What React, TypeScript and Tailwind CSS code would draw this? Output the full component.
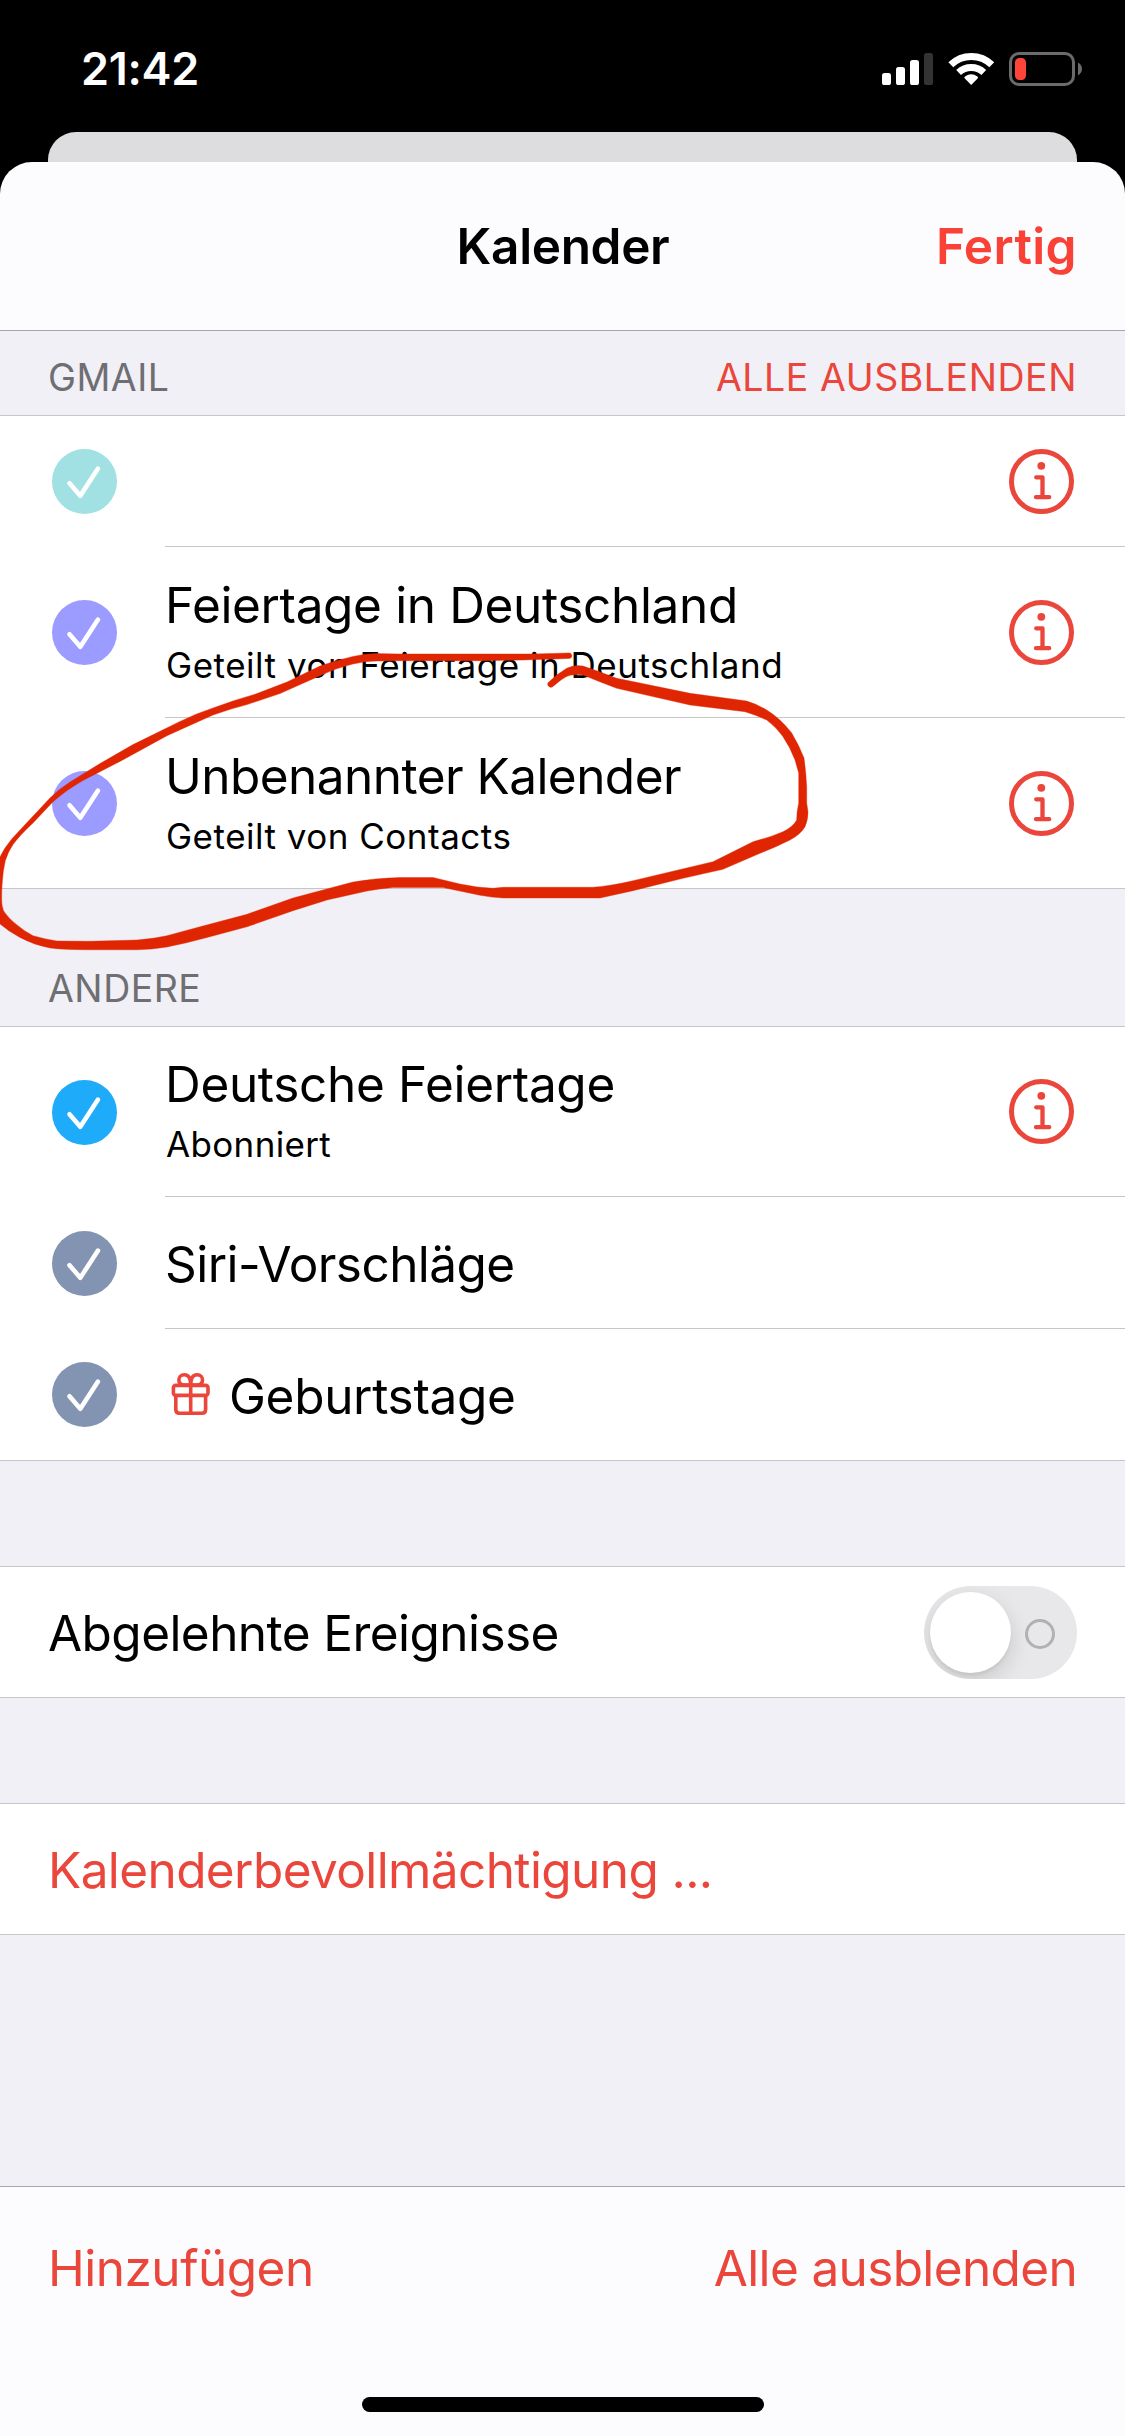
import React from "react"
import clsx from "clsx"


function StatusIcons () {
  return (
    <svg width="202" height="34" viewBox="882 52 202 34" fill="none">
      <g fill="#fff">
        <rect x="882" y="73" width="9" height="12" rx="2.6" />
        <rect x="896" y="67" width="9" height="18" rx="2.6" />
        <rect x="910" y="60" width="9" height="25" rx="2.6" />
      </g>
      <rect x="924" y="53" width="9" height="32" rx="2.6" fill="#333" />
      <g stroke="#fff" strokeWidth="7">
        <path d="M950.8 64.8A29.5 29.5 0 0 1 991.8 64.8" />
        <path d="M958.6 72.5A18.6 18.6 0 0 1 983.8 72.5" />
      </g>
      <path d="M971.2 85L964.6 78.2Q963.9 77.2 965 76.4A10.5 10.5 0 0 1 977.4 76.4Q978.5 77.2 977.8 78.2Z" fill="#fff" />
      <rect x="1010.5" y="53.5" width="63" height="31" rx="8.5" stroke="#6b6b6b" strokeWidth="3" />
      <rect x="1015" y="58" width="11" height="22" rx="4.5" fill="#ff4539" />
      <path d="M1078 62.6Q1082 65 1082 69Q1082 73 1078 75.4Z" fill="#6b6b6b" />
    </svg>
  )
}

function Check ({ color }: { color: string }) {
  return (
    <span className={clsx("block size-[65px] rounded-full", color)}>
      <svg width="65" height="65" viewBox="0 0 65 65" fill="none">
        <path d="M17.5 34.2L28.3 46.8L46 19.6" stroke="#fff" strokeWidth="4.6" strokeLinecap="round" strokeLinejoin="round" />
      </svg>
    </span>
  )
}

function InfoIcon () {
  return (
    <svg width="65" height="65" viewBox="0 0 65 65" fill="none" stroke="#ea463b">
      <circle cx="32.5" cy="32.5" r="30" strokeWidth="5" />
      <circle cx="32.3" cy="16.8" r="3.9" fill="#ea463b" stroke="none" />
      <path d="M27.2 28.3H33.5V48.2M27 48.2H40.2" strokeWidth="4.3" strokeLinecap="round" strokeLinejoin="round" />
    </svg>
  )
}

function GiftIcon () {
  return (
    <svg width="64" height="60" viewBox="165 1365 64 60" fill="none" stroke="#ea463b" strokeWidth="3.6" strokeLinejoin="round">
      <rect x="173.4" y="1384.4" width="34.6" height="10" rx="2.4" />
      <path d="M175.8 1394.4V1408.4Q175.8 1412.2 179.6 1412.2H201.8Q205.6 1412.2 205.6 1408.4V1394.4" />
      <path d="M190.7 1384V1412.2" />
      <path d="M190.7 1384H184.5C176.8 1384 177.2 1373.8 184.3 1373.8C188.4 1373.8 190.7 1377.4 190.7 1384C190.7 1377.4 193 1373.8 197.1 1373.8C204.2 1373.8 204.6 1384 196.9 1384Z" />
    </svg>
  )
}

type RowProps = {
  color: string
  height: string
  title?: string
  titleClass?: string
  subtitle?: string
  subtitleClass?: string
  icon?: React.ReactNode
  info?: boolean
  last?: boolean
}

function CalendarRow ({ color, height, title, titleClass, subtitle, subtitleClass, icon, info, last }: RowProps) {
  return (
    <li className={clsx("flex", height)}>
      <div className={clsx("flex w-[165px] items-center pl-[52px]", last && "border-b border-[#c6c6c9]")}>
        <Check color={color} />
      </div>
      <div className="flex flex-1 items-center justify-between border-b border-[#c6c6c9] pr-[51px]">
        <div>
          <div className={clsx("flex items-center text-[49.5px] leading-[60px] whitespace-nowrap", !subtitle && "pt-[2px]")}>
            {icon}
            <span className={titleClass}>{title}</span>
          </div>
          {subtitle && (
            <p className={clsx("mt-[9px] mb-[4px] pl-px text-[35px] leading-[42px] whitespace-nowrap", subtitleClass)}>{subtitle}</p>
          )}
        </div>
        {info && <InfoIcon />}
      </div>
    </li>
  )
}

function SectionHeader ({ title, action, className }: { title: string, action?: string, className: string }) {
  return (
    <div className={clsx("flex items-end justify-between px-12 pb-[17px] text-[37.5px] leading-[40px]", className)}>
      <h2 className="tracking-[0.5px] text-[#6e6e73]">{title}</h2>
      {action && <button className="tracking-[0.55px] text-[#ea463b]">{action}</button>}
    </div>
  )
}

function Toggle () {
  return (
    <div className="relative h-[93px] w-[153px] overflow-hidden rounded-full bg-[#e8e8ea]">
      <span className="absolute top-[6px] left-[6px] size-[81px] rounded-full bg-white shadow-[0_8px_22px_rgba(0,0,0,0.14),0_3px_3px_rgba(0,0,0,0.05)]" />
      <span className="absolute top-[33px] left-[101px] size-[30px] rounded-full border-[3px] border-[#b1b1b2]" />
    </div>
  )
}

// hand drawn loop around the unnamed calendar
function Scribble () {
  return (
    <svg className="pointer-events-none absolute top-0 left-0" width="1125" height="1000" viewBox="0 0 1125 1000">
      <path
        fill="#e02503"
        stroke="#e02503"
        strokeWidth="0.4"
        strokeLinejoin="round"
        d="M569 652.9L533 654L400 654L377 653.6Q366 653.5 353 656.4Q337 660 320 666L287 682L257 693.6Q234 700 213 708Q195 714 180 721.4L133 744.6L100 763.6L70 782Q59 789 50 798L20 830Q11 839 5 848Q2 853 -1 859V923
        Q8 931 20 937.5Q34 945 50 948Q60 949.5 90 949.8H137Q152 949.5 167 947Q187 943 207 937.5L247 926.8L293 910.7L327 900L367 891Q380 888.5 393 887.5H443L480 895.3Q492 897.5 503 898H600L633 890.7L683 878.3L723 869.3L760 853.3Q774 848 790 840Q801 834 805 826.7Q808 820 808 811.7L806.7 803V786.7Q806 772 804 758Q799 745 791.7 733Q780 718 766.7 710Q757 704 746.7 701L690 693.3L616.7 678.3Q598 671 583 666Q574 664.5 566.7 668.3Q557 674 548 682.7A3.2 3.2 0 0 0 552.7 686.7L561 680Q567 675.5 571.7 675Q578 674 583 675Q600 682 616.7 688.3L690 705L745 711.7Q756 715 766.7 720Q776 727 783 736.7Q790 747 795 760L798.7 773V803Q796.5 813 796.7 820Q793 827 783 831.7Q771 837 753 841.7L713 861.7L633 880.7Q610 886 593 887.3H503L493 888.3Q476 887.5 460 884L433 877.5H400Q375 878 353 882L293 898L247 914.3L200 926.8L167 935.7Q152 939 137 940L90 941.3L57 941Q44 939 33 935.7Q24 931 17 925Q8 918 3.5 910.7Q1.5 905 1.7 900Q1.5 890 2.3 882Q3 870 5.3 860.7Q8 852 13 844.6Q20 835 33 823L53 801.8Q66 790 83 780.4L120 761.4L167 735.7L213 715Q230 709 247 704.6L280 693.6L320 675.7Q336 668 353 664Q366 661 377 661L400 660.7H480L523 660L569 658.5A2.8 2.8 0 0 0 569 652.9Z"
      />
    </svg>
  )
}

export default function App () {
  return (
    <div className="relative flex h-[2436px] w-[1125px] flex-col overflow-hidden bg-black font-['Inter','Liberation_Sans',sans-serif] text-black antialiased">
      <div className="flex h-[132px] shrink-0 items-start justify-between pr-[41px] pl-[81px]">
        <span className="mt-[41px] text-[45px] leading-[56px] font-semibold tracking-[-0.3px] text-white">21:42</span>
        <div className="mt-[52px]">
          <StatusIcons />
        </div>
      </div>
      <div className="mx-12 h-[30px] shrink-0 rounded-t-[28px] bg-[#dddddf]" />

      <div className="relative flex flex-1 flex-col">
        <header className="grid h-[169px] shrink-0 grid-cols-3 items-center rounded-t-[32px] border-b border-[#a7a7ab] bg-[#fcfbfe] px-12 text-[49.5px] font-semibold">
          <span />
          <h1 className="pl-px text-center tracking-[-0.34px]">Kalender</h1>
          <button className="text-right tracking-[0.4px] text-[#f94136]">Fertig</button>
        </header>

        <main className="flex flex-1 flex-col bg-[#f1f0f6]">
          <SectionHeader title="GMAIL" action="ALLE AUSBLENDEN" className="h-[84px]" />
          <ul className="border-t border-[#c6c6c9] bg-white">
            <CalendarRow color="bg-[#a1e1e4]" height="h-[131px]" info />
            <CalendarRow
              color="bg-[#9c9bff]"
              height="h-[171px]"
              title="Feiertage in Deutschland"
              titleClass="tracking-[-0.36px]"
              subtitle="Geteilt von Feiertage in Deutschland"
              subtitleClass="tracking-[0.52px]"
              info
            />
            <CalendarRow
              color="bg-[#9c9bff]"
              height="h-[171px]"
              title="Unbenannter Kalender"
              titleClass="tracking-[-0.54px]"
              subtitle="Geteilt von Contacts"
              subtitleClass="tracking-[0.5px]"
              info
              last
            />
          </ul>

          <SectionHeader title="ANDERE" className="h-[137px]" />
          <ul className="border-t border-[#c6c6c9] bg-white">
            <CalendarRow
              color="bg-[#1eabf9]"
              height="h-[170px]"
              title="Deutsche Feiertage"
              titleClass="tracking-[-0.33px]"
              subtitle="Abonniert"
              subtitleClass="tracking-[0.35px]"
              info
            />
            <CalendarRow color="bg-[#8294b1]" height="h-[132px]" title="Siri-Vorschläge" titleClass="tracking-[-0.56px]" />
            <CalendarRow color="bg-[#8294b1]" height="h-[132px]" title="Geburtstage" titleClass="tracking-[-0.32px]" icon={<GiftIcon />} last />
          </ul>

          <div className="mt-[105px] flex h-[132px] items-center justify-between border-y border-[#c6c6c9] bg-white px-12 text-[49.5px]">
            <span className="pt-[2px] tracking-[-0.56px]">Abgelehnte Ereignisse</span>
            <Toggle />
          </div>

          <div className="mt-[105px] flex h-[132px] items-center border-y border-[#c6c6c9] bg-white px-12 text-[49.5px]">
            <button className="pt-[2px] tracking-[-0.6px] text-[#ea463b]">Kalenderbevollmächtigung ...</button>
          </div>
        </main>

        <footer className="flex h-[250px] shrink-0 flex-col items-center justify-between border-t border-[#a7a7ab] bg-[#fcfbfe] pt-[51px] pb-6">
          <div className="flex w-full justify-between px-12 text-[49.5px] leading-[60px] text-[#ea463b]">
            <button className="tracking-[-0.5px]">Hinzufügen</button>
            <button className="tracking-[-0.64px]">Alle ausblenden</button>
          </div>
          <span className="h-[15px] w-[402px] rounded-full bg-black" />
        </footer>
      </div>

      <Scribble />
    </div>
  )
}
